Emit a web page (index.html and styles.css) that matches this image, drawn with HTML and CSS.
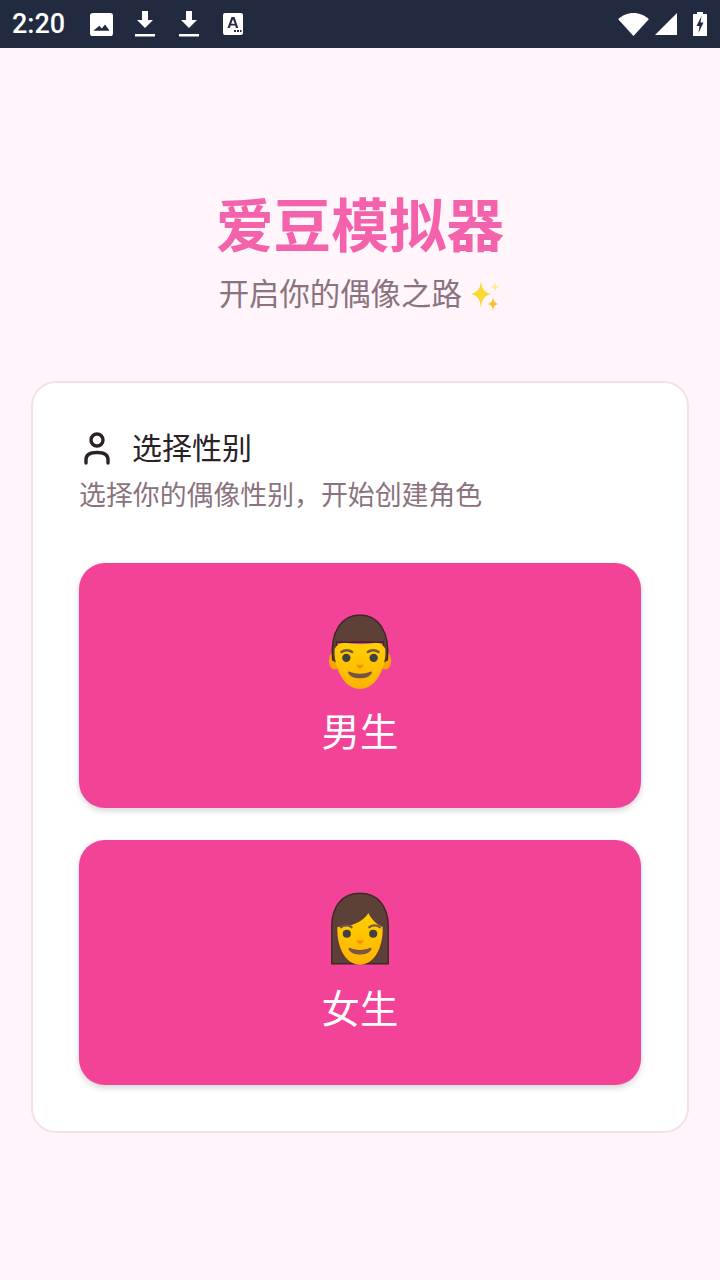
FILE: index.html
```html
<!DOCTYPE html>
<html lang="zh-CN">
<head>
  <meta charset="UTF-8">
  <title>爱豆模拟器</title>
  <link rel="stylesheet" href="styles.css">
</head>
<body>
  <div class="statusbar">
    <div class="status-left">
      <span class="hora">2:20</span>
      <svg class="ico-img" viewBox="0 0 24 24"><path fill="#fff" fill-rule="evenodd" d="M3 0h18a3 3 0 0 1 3 3v18a3 3 0 0 1-3 3H3a3 3 0 0 1-3-3V3a3 3 0 0 1 3-3zM3.500 18.500h17l-4.800-6.500-3.400 4.200-2.500-2.800z"/></svg>
      <svg class="ico-down" viewBox="0 0 20 26"><path fill="#fff" d="M7 0h6v9h5l-8 8-8-8h5zM0 23h20v2.500H0z"/></svg>
      <svg class="ico-down" viewBox="0 0 20 26"><path fill="#fff" d="M7 0h6v9h5l-8 8-8-8h5zM0 23h20v2.500H0z"/></svg>
      <svg class="ico-a" viewBox="0 0 20 22"><path fill="#fff" fill-rule="evenodd" d="M2 0h16a2 2 0 0 1 2 2v18a2 2 0 0 1-2 2H2a2 2 0 0 1-2-2V2a2 2 0 0 1 2-2zM8.500 4 4.500 15h2.300l.8-2.400h4.600l.8 2.400h2.300L11.500 4zM8.200 10.800 10 6.200l1.800 4.600zM11 17h2v2h-2zM14 17h2v2h-2zM17 17h1.500v2H17z"/></svg>
    </div>
    <div class="status-right">
      <svg class="ico-wifi" viewBox="0 0 32 24"><path fill="#fff" d="M0 6.500C4 2.500 9.800 0 16 0s12 2.500 16 6.500L16 24z"/></svg>
      <svg class="ico-signal" viewBox="0 0 22 22"><path fill="#fff" d="M22 0v22H0z"/></svg>
      <svg class="ico-bat" viewBox="0 0 14 24"><path fill="#fff" fill-rule="evenodd" d="M4 0h6v2h4v22H0V2h4zM8.500 4 3.500 14h3l-1 7 5-10.500h-3z"/></svg>
    </div>
  </div>

  <div class="contenido">
    <div class="cabecera">
      <h1 class="titulo">爱豆模拟器</h1>
      <p class="subtitulo">开启你的偶像之路
        <svg class="ico-brillo" viewBox="0 0 32 34">
          <path fill="#fdd835" d="M12 2c1 8 3 11 10 13-7 2-9 5-10 14-1-9-3-12-10-14 7-2 9-5 10-13z"/>
          <path fill="#fbc02d" d="M24 18c.5 4 1.500 5.500 5 7-3.500 1-4.500 3-5 7-.5-4-1.500-6-5-7 3.500-1.500 4.500-3 5-7z"/>
          <path fill="#fdeaa0" d="M26 3c.4 3 1.200 4.200 4 5-2.800.8-3.600 2-4 5-.4-3-1.200-4.200-4-5 2.800-.8 3.600-2 4-5z"/>
        </svg>
      </p>
    </div>

    <div class="tarjeta">
      <div class="tarjeta-titulo">
        <svg class="ico-persona" viewBox="0 0 26 33" fill="none" stroke="#2a2226" stroke-width="3.400">
          <circle cx="13" cy="8" r="6"/>
          <path stroke-linecap="round" d="M2 31v-3.500C2 23 6 20.500 13 20.500s11 2.500 11 7V31"/>
        </svg>
        <span>选择性别</span>
      </div>
      <p class="tarjeta-desc">选择你的偶像性别，开始创建角色</p>

      <div class="botones">
        <button class="boton">
          <svg class="cara" viewBox="0 0 64 80">
            <defs>
              <linearGradient id="piel" x1="0" y1="0" x2="0" y2="1">
                <stop offset="0" stop-color="#ffd000"/>
                <stop offset="1" stop-color="#ffb300"/>
              </linearGradient>
            </defs>
            <ellipse cx="6" cy="49" rx="6" ry="9" fill="#f5a300"/>
            <ellipse cx="58" cy="49" rx="6" ry="9" fill="#f5a300"/>
            <path fill="#5d4037" stroke="#3e2723" stroke-width="1.500" d="M4 48C1 18 14 2 32 2s31 16 28 46l-4 2V30H8v20z"/>
            <path fill="url(#piel)" d="M6 37c3-6 8-7 14-6 9 1.500 17 1.500 25 0 6-1 10 0 13 6 1 20-10 41-26 41S5 57 6 37z"/>
            <path fill="none" stroke="#795548" stroke-width="2.600" stroke-linecap="round" d="M13 40c3-2.500 8-2.500 11 0M40 40c3-2.500 8-2.500 11 0"/>
            <circle cx="18" cy="46" r="4.300" fill="#404040"/>
            <circle cx="46" cy="46" r="4.300" fill="#404040"/>
            <path fill="#f59300" d="M28 53h8c-1 3-3 4-4 4s-3-1-4-4z"/>
            <path fill="#795548" d="M21 60c7 3 15 3 22 0 1 0 1.500 1 1 2-3 4-7 5-12 5s-9-1-12-5c-.5-1 0-2 1-2z"/>
          </svg>
          <span>男生</span>
        </button>
        <button class="boton">
          <svg class="cara" viewBox="0 0 68 78">
            <path fill="#5d4037" stroke="#3e2723" stroke-width="1.500" d="M4 76V36C4 14 16 1 34 1s30 13 30 35v40z"/>
            <path fill="url(#piel)" d="M10 37c14 0 28-6 33-15 3 7 9 12 15 15 1 20-8 40-24 40S9 57 10 37z"/>
            <path fill="none" stroke="#795548" stroke-width="2.600" stroke-linecap="round" d="M14 37c3-2.500 8-2.500 11 0M44 37c3-2.500 8-2.500 11 0"/>
            <circle cx="20" cy="44" r="4.300" fill="#404040"/>
            <circle cx="48" cy="44" r="4.300" fill="#404040"/>
            <path fill="#f59300" d="M30 51h8c-1 3-3 4-4 4s-3-1-4-4z"/>
            <path fill="#795548" d="M23 59c7 3 15 3 22 0 1 0 1.500 1 1 2-3 4-7 5-12 5s-9-1-12-5c-.5-1 0-2 1-2z"/>
          </svg>
          <span>女生</span>
        </button>
      </div>
    </div>
  </div>
</body>
</html>
```
FILE: styles.css
```css
html, body {
  margin: 0;
  padding: 0;
  width: 720px;
  height: 1280px;
  overflow: hidden;
  background-color: #fff5fb;
  font-family: Roboto, "Noto Sans CJK SC", sans-serif;
}

.statusbar {
  height: 48px;
  background-color: #212a3f;
  display: flex;
  justify-content: space-between;
  align-items: center;
  padding: 0 12px;
  box-sizing: border-box;
}

.status-left,
.status-right {
  display: flex;
  align-items: center;
}

.hora {
  color: #fff;
  font-size: 27px;
  font-weight: 500;
  margin-right: 25px;
}

.ico-img {
  width: 23px;
  height: 23px;
  margin-right: 22px;
}

.ico-down {
  width: 20px;
  height: 26px;
  margin-right: 24px;
}

.ico-a {
  width: 20px;
  height: 22px;
}

.ico-wifi {
  width: 31px;
  height: 23px;
  margin-right: 6px;
}

.ico-signal {
  width: 22px;
  height: 22px;
  margin-right: 16px;
}

.ico-bat {
  width: 14px;
  height: 24px;
  margin-right: 1px;
}

.contenido {
  height: 1232px;
  display: flex;
  flex-direction: column;
  justify-content: center;
  padding: 0 31px;
  box-sizing: border-box;
}

.cabecera {
  text-align: center;
  margin-bottom: 64px;
}

.titulo {
  margin: 0 0 13px;
  font-size: 57.6px;
  line-height: 64px;
  font-weight: 700;
  color: #f562ac;
}

.subtitulo {
  margin: 0;
  font-size: 30.4px;
  line-height: 44px;
  color: #8a737f;
}

.ico-brillo {
  width: 32px;
  height: 34px;
  vertical-align: -8px;
}

.tarjeta {
  background-color: #fff;
  border: 2px solid #f3e1ea;
  border-radius: 25px;
  padding: 46px;
}

.tarjeta-titulo {
  display: flex;
  align-items: center;
  gap: 22px;
  padding-left: 5px;
  font-size: 30px;
  line-height: 40px;
  color: #2a2226;
}

.ico-persona {
  width: 26px;
  height: 33px;
}

.tarjeta-desc {
  margin: 8px 0 48px;
  font-size: 26.880px;
  line-height: 38px;
  color: #8a737f;
}

.botones {
  display: flex;
  flex-direction: column;
  gap: 32px;
}

.boton {
  height: 245px;
  border: none;
  border-radius: 26px;
  background-color: #f34398;
  box-shadow: 0 3px 6px rgba(0, 0, 0, 0.16);
  color: #fff;
  font-family: inherit;
  font-size: 38.4px;
  display: flex;
  flex-direction: column;
  align-items: center;
  justify-content: center;
  gap: 10px;
  padding: 0;
}

.cara {
  width: 64px;
  height: 78px;
}
```
